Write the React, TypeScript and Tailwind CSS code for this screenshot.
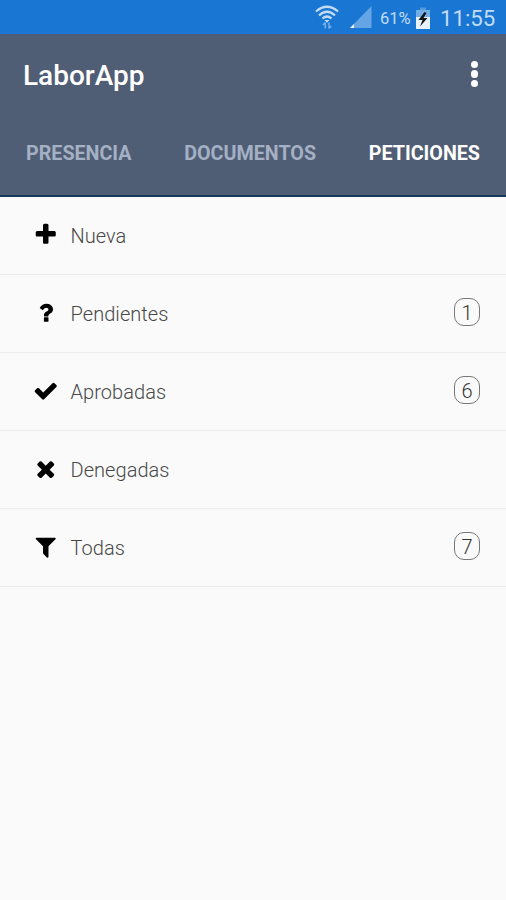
import React, { useState } from "react";

interface MenuItem {
  id: string;
  label: string;
  count?: number;
  icon: string;
}

const tabs = [
  { id: "presencia", label: "PRESENCIA" },
  { id: "documentos", label: "DOCUMENTOS" },
  { id: "peticiones", label: "PETICIONES" },
];

const items: MenuItem[] = [
  {
    id: "nueva",
    label: "Nueva",
    icon: "M1600 736v192q0 40-28 68t-68 28h-416v416q0 40-28 68t-68 28h-192q-40 0-68-28t-28-68v-416h-416q-40 0-68-28t-28-68v-192q0-40 28-68t68-28h416v-416q0-40 28-68t68-28h192q40 0 68 28t28 68v416h416q40 0 68 28t28 68z",
  },
  {
    id: "pendientes",
    label: "Pendientes",
    count: 1,
    icon: "M1088 1256v240q0 16-12 28t-28 12h-240q-16 0-28-12t-12-28v-240q0-16 12-28t28-12h240q16 0 28 12t12 28zm316-600q0 54-15.500 101t-35 76.500-55 59.500-57.500 43.500-61 35.500q-41 23-68.500 65t-27.500 67q0 17-12 32.500t-28 15.500h-240q-15 0-25.500-18.500t-10.500-37.500v-45q0-83 65-156.500t143-108.500q59-27 84-56t25-76q0-42-46.500-74t-107.500-32q-65 0-108 29-35 25-107 115-13 16-31 16-12 0-25-8l-164-125q-13-10-15.500-25t5.500-28q160-266 464-266 80 0 161 31t146 83 106 127.500 41 158.500z",
  },
  {
    id: "aprobadas",
    label: "Aprobadas",
    count: 6,
    icon: "M1671 566q0 40-28 68l-724 724-136 136q-28 28-68 28t-68-28l-136-136-362-362q-28-28-28-68t28-68l136-136q28-28 68-28t68 28l294 295 656-657q28-28 68-28t68 28l136 136q28 28 28 68z",
  },
  {
    id: "denegadas",
    label: "Denegadas",
    icon: "M1490 1322q0 40-28 68l-136 136q-28 28-68 28t-68-28l-294-294-294 294q-28 28-68 28t-68-28l-136-136q-28-28-28-68t28-68l294-294-294-294q-28-28-28-68t28-68l136-136q28-28 68-28t68 28l294 294 294-294q28-28 68-28t68 28l136 136q28 28 28 68t-28 68l-294 294 294 294q28 28 28 68z",
  },
  {
    id: "todas",
    label: "Todas",
    count: 7,
    icon: "M1595 295q17 41-14 70l-493 493v742q0 42-39 59-13 5-25 5-27 0-45-19l-256-256q-19-19-19-45v-486l-493-493q-31-29-14-70 17-39 59-39h1280q42 0 59 39z",
  },
];

const StatusBar: React.FC = () => (
  <div className="flex h-[34px] items-center bg-[#1976d2] pr-[11px] text-[#c3dcf6]">
    <svg className="ml-auto h-[26px] w-[26px]" viewBox="0 0 26 26" fill="none" stroke="currentColor" strokeWidth="2.200">
      <path d="M2 7.500Q13 -2 24 7.500" />
      <path d="M5 11.500Q13 4 21 11.500" />
      <path d="M8.500 14.500Q13 10.500 17.500 14.500" />
      <path d="M10.500 16h5L13 18.800z" fill="currentColor" stroke="none" />
      <path d="M11.300 24.500v-6M9 21l2.300-2.500M15 18.500v6M17.300 22L15 24.500" stroke="#76afe7" strokeWidth="1.600" />
    </svg>
    <svg className="ml-[8px] h-[24px] w-[24px]" viewBox="0 0 24 24">
      <path d="M23.500 1v22H2z" fill="#65a5e5" />
      <path d="M6 19v4H2z" fill="#f2f8ff" />
    </svg>
    <span className="ml-[8px] w-[33px] pt-[4px] text-[16.500px] whitespace-nowrap">61%</span>
    <svg className="mt-[1px] ml-[2px] h-[24px] w-[16px]" viewBox="0 0 16 24">
      <path d="M5 1.500h6v3H5z" fill="#5198de" />
      <path d="M1 4h14v9H1z" fill="#72ade5" />
      <path d="M1 11h14v12H1z" fill="#e8f2fb" />
      <path d="M9.500 6L3.500 14h4L5 20.500 12.500 12H8.500L11.500 7z" fill="#10151c" />
    </svg>
    <span className="ml-[9px] w-[55px] pt-[3px] text-[22.200px] whitespace-nowrap">11:55</span>
  </div>
);

const App: React.FC = () => {
  const [activeTab, setActiveTab] = useState("peticiones");

  return (
    <div className="flex h-[900px] w-[506px] flex-col overflow-hidden bg-[#fafafa] font-['Roboto',sans-serif]">
      <StatusBar />

      <header className="h-[163px] border-b-2 border-[#17395f] bg-[#505e75]">
        <div className="flex h-[80px] items-center justify-between pr-[28px] pl-[23px]">
          <h1 className="pt-[3px] text-[28px] font-medium text-white">LaborApp</h1>
          <button type="button" aria-label="Menu" className="flex flex-col gap-[2px]">
            <span className="size-[7.500px] rounded-full bg-white" />
            <span className="size-[7.500px] rounded-full bg-white" />
            <span className="size-[7.500px] rounded-full bg-white" />
          </button>
        </div>
        <nav className="flex h-[79px] items-center justify-between px-[26px]">
          {tabs.map((tab) => (
            <button key={tab.id} type="button" onClick={() => setActiveTab(tab.id)} className={`text-[19.700px] font-bold whitespace-nowrap ${activeTab === tab.id ? "text-white" : "text-[#a4b0c4]"}`}>
              {tab.label}
            </button>
          ))}
        </nav>
      </header>

      <ul>
        {items.map((item) => (
          <li key={item.id} className="flex h-[78px] items-center border-b border-[#ececec] pr-[26px] pb-px pl-[33px]">
            <svg className="size-[25.500px]" viewBox="0 0 1792 1792" fill="#000">
              <path d={item.icon} />
            </svg>
            <span className="ml-[12px] pt-px text-[20px] font-light tracking-[0.05px] text-[#484848]">{item.label}</span>
            {item.count !== undefined && (
              <span className="mb-[2px] ml-auto flex h-[28px] w-[26px] items-center justify-center rounded-[10px] border border-[#777] pt-[2px] text-[20px] font-light text-[#333]">{item.count}</span>
            )}
          </li>
        ))}
      </ul>
    </div>
  );
};

export default App;
